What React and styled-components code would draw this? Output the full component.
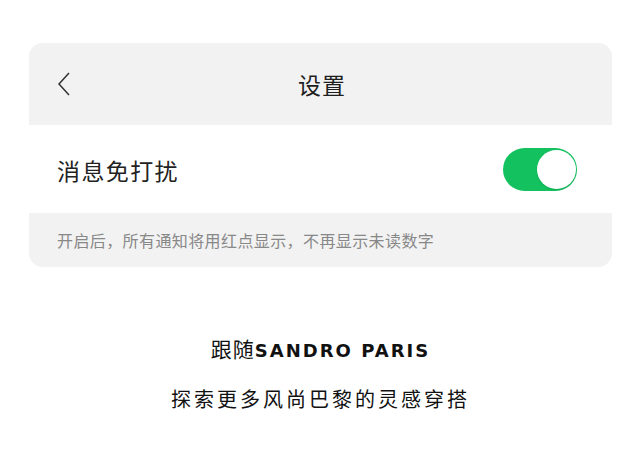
import React from "react";
import styled, { createGlobalStyle } from "styled-components";

const Global = createGlobalStyle`
  html, body { margin: 0; padding: 0; background: #ffffff; }
  body { font-family: "Noto Sans CJK SC", "Noto Sans", sans-serif; }
`;

const Page = styled.div`
  width: 640px;
  height: 467px;
  padding: 43px 28px 0 29px;
  box-sizing: border-box;
  display: flex;
  flex-direction: column;
`;

const Card = styled.section`
  width: 583px;
  border-radius: 14px;
  overflow: hidden;
  background: #f2f2f2;
  display: flex;
  flex-direction: column;
`;

const Header = styled.header`
  height: 82px;
  display: grid;
  grid-template-columns: 60px 1fr 60px;
  align-items: center;
  background: #f2f2f2;
`;

const BackButton = styled.div`
  display: flex;
  align-items: center;
  padding-left: 28px;
  height: 100%;
`;

const Title = styled.h1`
  margin: 0;
  text-align: center;
  font-size: 23px;
  font-weight: 400;
  letter-spacing: 1px;
  color: #1f1f1f;
  line-height: 1;
  padding-left: 3px;
`;

const Row = styled.div`
  height: 88px;
  background: #ffffff;
  display: flex;
  align-items: center;
  justify-content: space-between;
  padding: 0 35px 0 28px;
`;

const Label = styled.span`
  font-size: 23px;
  letter-spacing: 1.4px;
  color: #222222;
  line-height: 1;
  padding-top: 3px;
`;

const Toggle = styled.div`
  width: 74px;
  height: 43px;
  border-radius: 22px;
  background: ${(p) => (p.$on ? "#13c25f" : "#e5e5e5")};
  display: flex;
  align-items: center;
  justify-content: ${(p) => (p.$on ? "flex-end" : "flex-start")};
  padding: 0 1px;
  box-sizing: border-box;
`;

const Knob = styled.div`
  width: 39px;
  height: 39px;
  border-radius: 50%;
  background: #ffffff;
  box-shadow: 0 1px 2px rgba(0, 0, 0, 0.12);
`;

const Note = styled.p`
  margin: 0;
  height: 54px;
  display: flex;
  align-items: center;
  padding: 0 28px;
  font-size: 16px;
  letter-spacing: 0.4px;
  color: #888888;
`;

const Follow = styled.div`
  margin-top: 68px;
  display: flex;
  flex-direction: column;
  align-items: center;
  gap: 22px;
  color: #111111;
`;

const FollowLine = styled.div`
  font-size: ${(p) => p.$size || "20px"};
  letter-spacing: ${(p) => p.$ls || "0"};
  line-height: 26px;
`;

const Brand = styled.span`
  font-family: "DejaVu Sans", "Noto Sans", sans-serif;
  font-weight: 700;
  font-size: 18px;
  letter-spacing: 2px;
`;

export default function App() {
  return (
    <>
      <Global />
      <Page>
        <Card>
          <Header>
            <BackButton>
              <svg width="14" height="24" viewBox="0 0 14 24">
                <path d="M12 1 L2 12 L12 23" fill="none" stroke="#333" strokeWidth="1.5" />
              </svg>
            </BackButton>
            <Title>设置</Title>
            <span />
          </Header>
          <Row>
            <Label>消息免打扰</Label>
            <Toggle $on>
              <Knob />
            </Toggle>
          </Row>
          <Note>开启后，所有通知将用红点显示，不再显示未读数字</Note>
        </Card>
        <Follow>
          <FollowLine $size="21px" $ls="1px">
            跟随<Brand>SANDRO PARIS</Brand>
          </FollowLine>
          <FollowLine $ls="3px">探索更多风尚巴黎的灵感穿搭</FollowLine>
        </Follow>
      </Page>
    </>
  );
}
